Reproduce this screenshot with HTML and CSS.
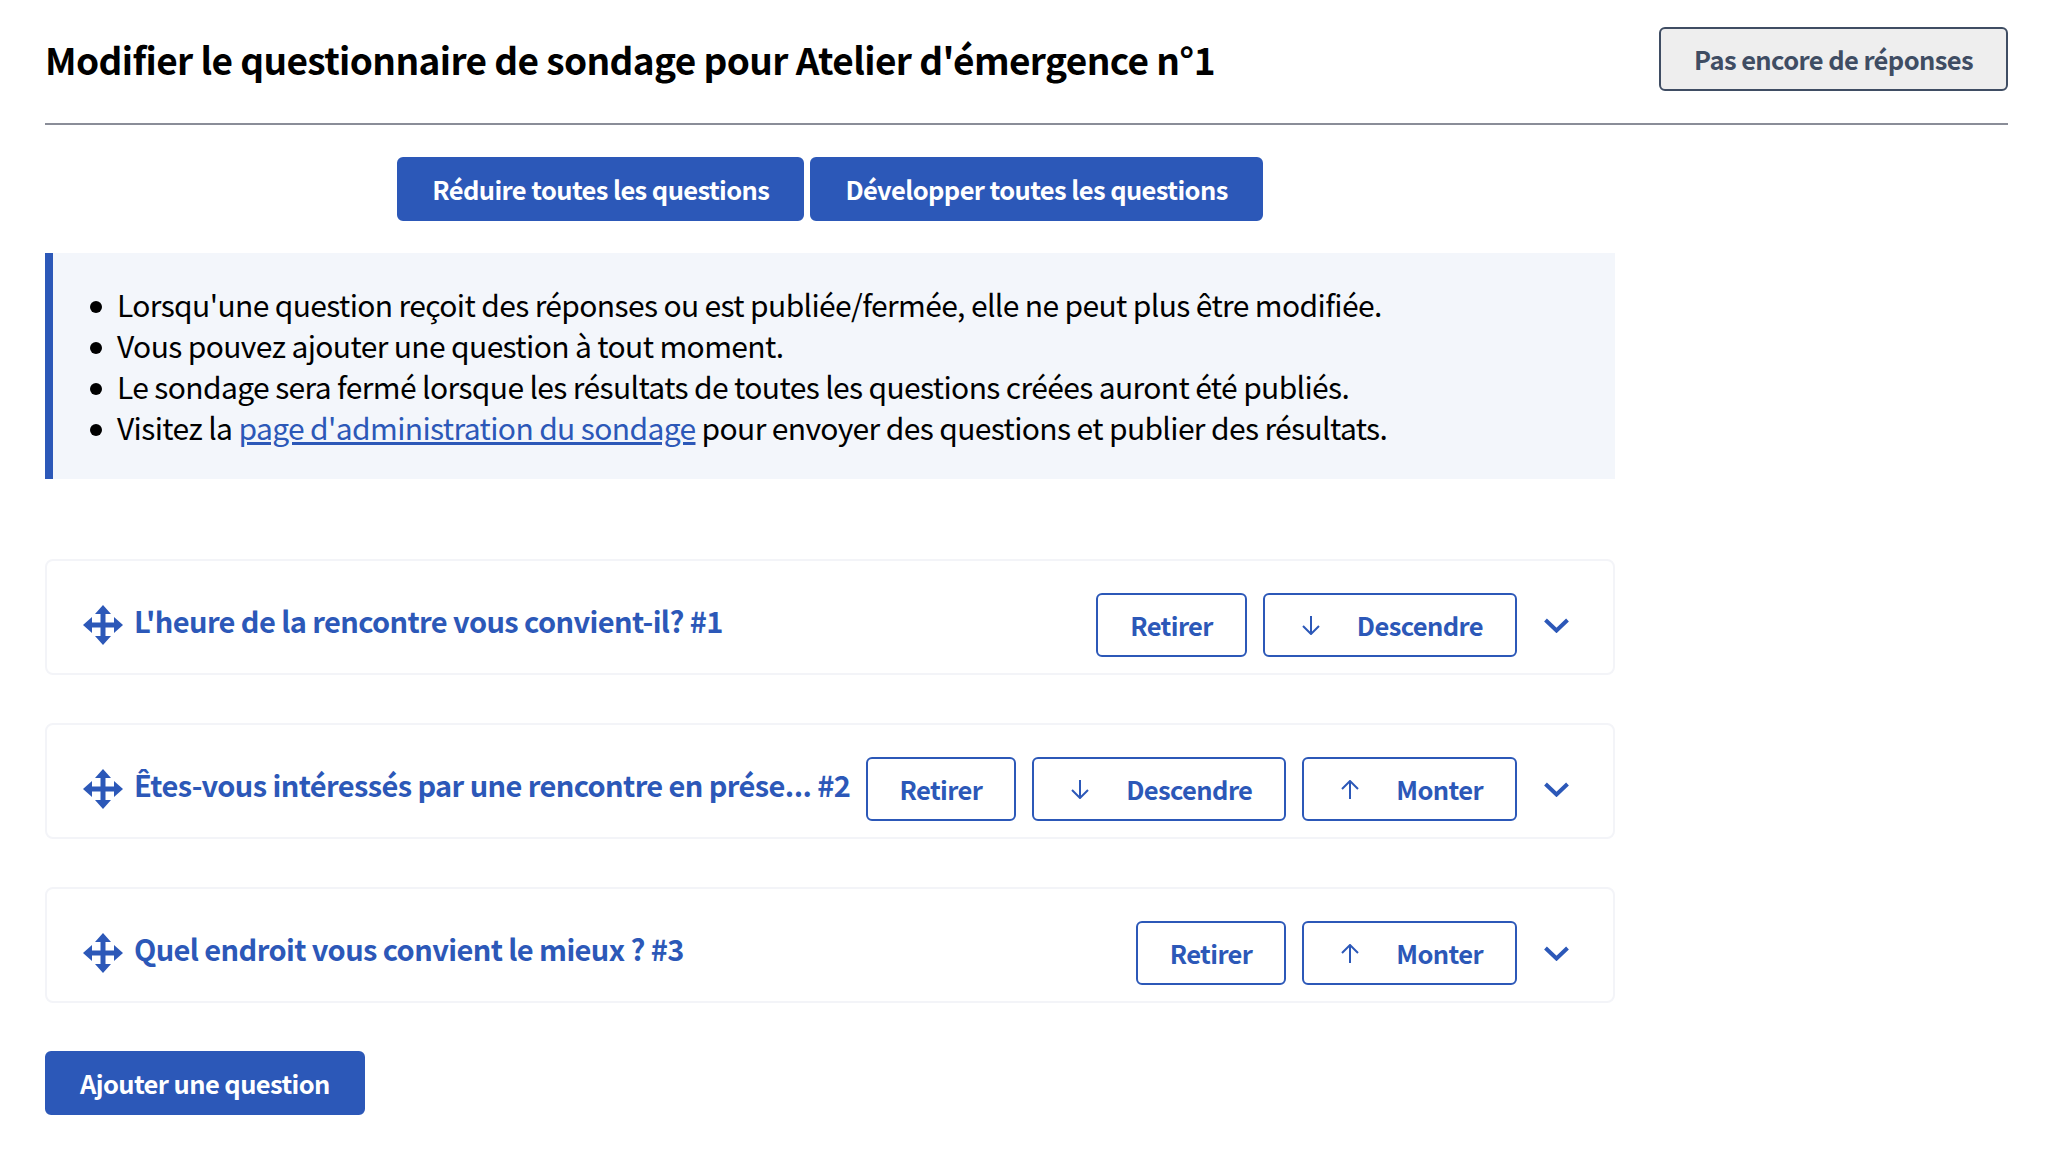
FILE: index.html
```html
<!DOCTYPE html>
<html lang="fr">
<head>
<meta charset="utf-8">
<title>Modifier le questionnaire</title>
<link rel="stylesheet" href="styles.css">
</head>
<body>
<svg class="defs" width="0" height="0" aria-hidden="true">
  <symbol id="move" viewBox="0 0 40 40"><path fill="currentColor" d="M20 0l8 9h-5.500v8.500H31V12l9 8-9 8v-5.500h-8.500V31H28l-8 9-8-9h5.500v-8.500H9V28l-9-8 9-8v5.500h8.500V9H12z"/></symbol>
  <symbol id="down" viewBox="0 0 18 19"><path fill="none" stroke="currentColor" stroke-width="2" d="M9 0v17.500M1 10l8 8 8-8"/></symbol>
  <symbol id="up" viewBox="0 0 18 19"><path fill="none" stroke="currentColor" stroke-width="2" d="M9 19V1.500M1 9l8-8 8 8"/></symbol>
  <symbol id="chev" viewBox="0 0 25 15"><path fill="none" stroke="currentColor" stroke-width="4" d="M1.500 2 12.500 12.500 23.500 2"/></symbol>
</svg>
<main class="page">
  <header class="header">
    <h1 class="title">Modifier le questionnaire de sondage pour Atelier d'émergence n°1</h1>
    <button class="btn btn-status" type="button">Pas encore de réponses</button>
  </header>
  <div class="content">
    <div class="toolbar">
      <button class="btn btn-primary" type="button">Réduire toutes les questions</button>
      <button class="btn btn-primary" type="button">Développer toutes les questions</button>
    </div>
    <section class="notice">
      <ul class="notice-list">
        <li>Lorsqu'une question reçoit des réponses ou est publiée/fermée, elle ne peut plus être modifiée.</li>
        <li>Vous pouvez ajouter une question à tout moment.</li>
        <li>Le sondage sera fermé lorsque les résultats de toutes les questions créées auront été publiés.</li>
        <li>Visitez la <a class="link" href="#">page d'administration du sondage</a> pour envoyer des questions et publier des résultats.</li>
      </ul>
    </section>
    <div class="questions">
      <article class="card">
        <svg class="icon-move"><use href="#move"/></svg>
        <h2 class="q-title">L'heure de la rencontre vous convient-il? #1</h2>
        <div class="actions">
          <button class="btn btn-outline" type="button">Retirer</button>
          <button class="btn btn-outline btn-icon" type="button"><svg class="icon-arrow"><use href="#down"/></svg>Descendre</button>
        </div>
        <svg class="icon-chev"><use href="#chev"/></svg>
      </article>
      <article class="card">
        <svg class="icon-move"><use href="#move"/></svg>
        <h2 class="q-title">Êtes-vous intéressés par une rencontre en prése... #2</h2>
        <div class="actions">
          <button class="btn btn-outline" type="button">Retirer</button>
          <button class="btn btn-outline btn-icon" type="button"><svg class="icon-arrow"><use href="#down"/></svg>Descendre</button>
          <button class="btn btn-outline btn-icon" type="button"><svg class="icon-arrow"><use href="#up"/></svg>Monter</button>
        </div>
        <svg class="icon-chev"><use href="#chev"/></svg>
      </article>
      <article class="card">
        <svg class="icon-move"><use href="#move"/></svg>
        <h2 class="q-title">Quel endroit vous convient le mieux ? #3</h2>
        <div class="actions">
          <button class="btn btn-outline" type="button">Retirer</button>
          <button class="btn btn-outline btn-icon" type="button"><svg class="icon-arrow"><use href="#up"/></svg>Monter</button>
        </div>
        <svg class="icon-chev"><use href="#chev"/></svg>
      </article>
    </div>
    <button class="btn btn-primary btn-add" type="button">Ajouter une question</button>
  </div>
</main>
</body>
</html>
```
FILE: styles.css
```css
* { box-sizing: border-box; }
html, body { margin: 0; padding: 0; background: #fff; }
body {
  font-family: "Noto Sans CJK SC", "Noto Sans", sans-serif;
  color: #000;
  width: 2050px;
  height: 1166px;
  overflow: hidden;
}
.defs { position: absolute; }
.page { padding: 27px 42px 0 45px; }
.header {
  display: flex;
  justify-content: space-between;
  align-items: flex-start;
  height: 98px;
  border-bottom: 2px solid #8a8d98;
}
.title { margin: 8px 0 0; font-size: 37px; line-height: 48px; font-weight: 700; letter-spacing: -0.6px; }
.content { width: 1570px; }
.toolbar { display: flex; justify-content: center; gap: 6px; margin-top: 32px; }
.btn {
  font-family: inherit;
  font-size: 25.5px;
  font-weight: 700;
  letter-spacing: -0.6px;
  line-height: 36px;
  height: 64px;
  border-radius: 6px;
  padding: 0 33px;
  border: 2px solid transparent;
  white-space: nowrap;
  display: inline-flex;
  align-items: center;
  justify-content: center;
}
.btn-primary { background: #2c58b8; color: #fff; border-color: #2c58b8; }
.btn-status { background: #eee; color: #3f4d63; border-color: #3f4d63; }
.btn-outline { background: #fff; color: #2c58b8; border-color: #2c58b8; padding: 0 32px; }
.btn-icon { gap: 37px; padding-left: 37px; }
.notice {
  margin-top: 32px;
  height: 226px;
  background: #f3f6fb;
  border-left: 8px solid #2c58b8;
  padding-top: 31px;
}
.notice-list { margin: 0; padding: 0 0 0 64px; list-style: none; font-size: 30px; line-height: 41px; letter-spacing: -0.63px; }
.notice-list li { position: relative; }
.notice-list li::before {
  content: "";
  position: absolute;
  left: -27px;
  top: 17px;
  width: 12px;
  height: 12px;
  border-radius: 50%;
  background: #000;
}
.link { color: #2c58b8; }
.questions { margin-top: 80px; display: flex; flex-direction: column; gap: 48px; }
.card {
  height: 116px;
  border: 2px solid #f3f4f8;
  border-radius: 8px;
  display: flex;
  align-items: center;
  padding: 16px 44px 0 36px;
}
.icon-move { width: 40px; height: 40px; color: #2c58b8; flex: none; margin-right: 11px; }
.q-title { margin: 0 0 10px; flex: 1; min-width: 0; font-size: 29px; line-height: 40px; font-weight: 700; letter-spacing: -0.6px; color: #2c58b8; white-space: nowrap; }
.actions { display: flex; gap: 16px; }
.icon-arrow { width: 18px; height: 19px; flex: none; }
.icon-chev { width: 25px; height: 15px; color: #2c58b8; flex: none; margin-left: 27px; }
.btn-add { margin-top: 48px; }
```
